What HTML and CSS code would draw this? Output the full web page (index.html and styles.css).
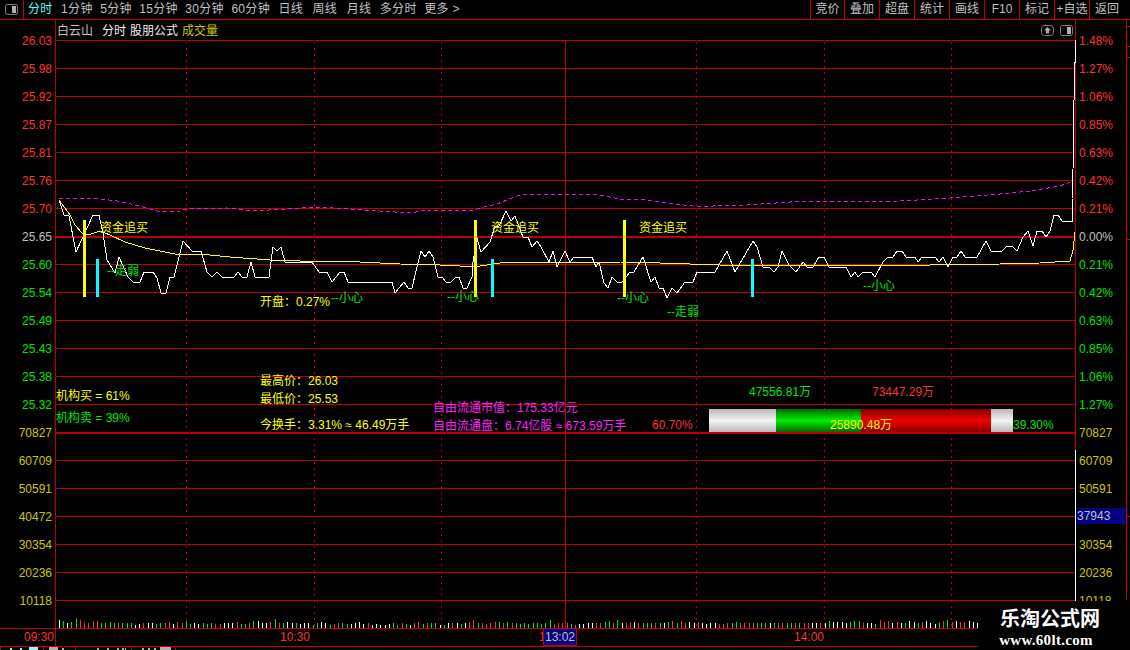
FILE: index.html
```html
<!DOCTYPE html>
<html lang="zh-CN">
<head>
<meta charset="utf-8">
<title>白云山 分时</title>
<link rel="stylesheet" href="styles.css">
</head>
<body>
<header class="toolbar">
  <div class="panel-btn">
    <svg class="icon" width="13" height="11" viewBox="0 0 13 11"><rect class="icon-line" x="0.5" y="0.5" width="12" height="10" rx="2"/><rect class="icon-fill" x="7" y="2" width="4" height="7"/></svg>
  </div>
  <nav class="periods">
    <span class="period active">分时</span>
    <span class="period">1分钟</span>
    <span class="period">5分钟</span>
    <span class="period">15分钟</span>
    <span class="period">30分钟</span>
    <span class="period">60分钟</span>
    <span class="period wide">日线</span>
    <span class="period wide">周线</span>
    <span class="period wide">月线</span>
    <span class="period">多分时</span>
    <span class="period">更多 &gt;</span>
  </nav>
  <nav class="actions">
    <span class="action">竞价</span>
    <span class="action">叠加</span>
    <span class="action">超盘</span>
    <span class="action">统计</span>
    <span class="action">画线</span>
    <span class="action">F10</span>
    <span class="action">标记</span>
    <span class="action">+自选</span>
    <span class="action">返回</span>
  </nav>
</header>

<svg class="chart" width="1130" height="626" viewBox="0 20 1130 626">
  <defs>
    <linearGradient id="gWhite" x1="0" y1="0" x2="0" y2="1"><stop offset="0" stop-color="#b8b8b8"/><stop offset="0.5" stop-color="#f4f4f4"/><stop offset="1" stop-color="#b8b8b8"/></linearGradient>
    <linearGradient id="gGreen" x1="0" y1="0" x2="0" y2="1"><stop offset="0" stop-color="#006800"/><stop offset="0.5" stop-color="#00f000"/><stop offset="1" stop-color="#006800"/></linearGradient>
    <linearGradient id="gRed" x1="0" y1="0" x2="0" y2="1"><stop offset="0" stop-color="#860000"/><stop offset="0.5" stop-color="#f00000"/><stop offset="1" stop-color="#860000"/></linearGradient>
  </defs>

  <!-- frame and vertical dividers -->
  <path class="grid" d="M55.5 20V646M1075.5 20V646M1126.5 20V600M1126 26.5h4M1126 46.5h4M1126 57.5h4M1126 239.5h4M1126 516.5h4M565.5 40V628"/>
  <path class="grid dotted" d="M186.5 42V628M314.5 42V628M441.5 42V628M696.5 42V628M824.5 42V628M951.5 42V628"/>

  <!-- horizontal grid -->
  <path class="grid" d="M55 40.5H1076M55 68.5H1075M55 96.5H1075M55 124.5H1075M55 152.5H1075M55 180.5H1075M55 208.5H1075M55 264.5H1075M55 292.5H1075M55 320.5H1075M55 348.5H1075M55 376.5H1075M55 404.5H1075M55 460.5H1075M55 488.5H1075M55 516.5H1075M55 544.5H1075M55 572.5H1075M55 600.5H1075M0 628.5H1130"/>
  <path class="grid thick" d="M55 237H1075M55 433H1075"/>

  <!-- chart title row -->
  <text class="t grey" x="57" y="35">白云山</text>
  <text class="t white" x="102" y="35">分时</text>
  <text class="t white" x="130" y="35">股朋公式</text>
  <text class="t olive" x="182" y="35">成交量</text>
  <rect class="icon-line" x="1041.5" y="25.5" width="12" height="10" rx="3"/>
  <path class="icon-fill" d="M1047.5 27l3.500 3.500h-2v3h-3v-3h-2z"/>
  <rect class="icon-line" x="1060.5" y="25.5" width="12" height="10" rx="2"/>
  <rect class="icon-fill" x="1067" y="27" width="4" height="7"/>

  <!-- price axis -->
  <g class="t end red">
    <text x="52" y="45">26.03</text><text x="52" y="73">25.98</text><text x="52" y="101">25.92</text><text x="52" y="129">25.87</text><text x="52" y="157">25.81</text><text x="52" y="185">25.76</text><text x="52" y="213">25.70</text>
  </g>
  <text class="t end grey" x="52" y="241">25.65</text>
  <g class="t end green">
    <text x="52" y="269">25.60</text><text x="52" y="297">25.54</text><text x="52" y="325">25.49</text><text x="52" y="353">25.43</text><text x="52" y="381">25.38</text><text x="52" y="409">25.32</text>
  </g>
  <g class="t red">
    <text x="1079" y="45">1.48%</text><text x="1079" y="73">1.27%</text><text x="1079" y="101">1.06%</text><text x="1079" y="129">0.85%</text><text x="1079" y="157">0.63%</text><text x="1079" y="185">0.42%</text><text x="1079" y="213">0.21%</text>
  </g>
  <text class="t grey" x="1079" y="241">0.00%</text>
  <g class="t green">
    <text x="1079" y="269">0.21%</text><text x="1079" y="297">0.42%</text><text x="1079" y="325">0.63%</text><text x="1079" y="353">0.85%</text><text x="1079" y="381">1.06%</text><text x="1079" y="409">1.27%</text>
  </g>

  <!-- volume axis -->
  <g class="t end olive">
    <text x="52" y="437">70827</text><text x="52" y="465">60709</text><text x="52" y="493">50591</text><text x="52" y="521">40472</text><text x="52" y="549">30354</text><text x="52" y="577">20236</text><text x="52" y="605">10118</text>
  </g>
  <g class="t olive">
    <text x="1079" y="437">70827</text><text x="1079" y="465">60709</text><text x="1079" y="493">50591</text><text x="1079" y="549">30354</text><text x="1079" y="577">20236</text><text x="1079" y="605">10118</text>
  </g>
  <rect class="axis-tag" x="1076" y="508" width="50" height="16"/>
  <text class="t grey" x="1077" y="520">37943</text>

  <!-- price traces -->
  <polyline class="trace magenta" points="59,198 93,198 117,201 140,206 157,211 180,211 187,209 227,208 253,211 317,207 333,208 380,211 410,213 427,210 470,211 480,208 497,204 517,196 530,194 567,194 600,195 620,199 647,200 667,203 693,206 713,206 747,205 790,202 900,201 950,198 1000,194 1030,191 1060,186 1073,181"/>
  <polyline class="trace white-line" points="59,200 64,215 69,216 76,252 88,226 93,215 99,215 103,233 107,260 115,273 119,257 128,277 133,282 140,282 144,272 153,272 157,278 161,293 166,293 170,277 174,277 183,241 192,251 201,251 207,272 212,277 217,272 222,277 234,277 238,272 242,277 247,277 251,262 255,277 269,277 273,247 277,251 281,247 285,262 312,262 319,272 327,272 332,282 340,272 344,272 348,282 392,282 395,293 404,282 408,288 412,288 417,267 421,251 425,257 429,251 433,257 438,277 442,277 446,282 451,282 456,277 459,277 463,288 467,288 472,277 473,262 477,238 481,252 490,242 495,226 499,226 506,211 511,221 515,216 523,237 528,237 532,247 537,241 541,247 549,262 553,251 557,267 565,251 570,262 574,257 592,257 596,267 599,262 604,283 608,288 612,277 617,282 622,282 626,277 630,272 634,272 643,257 651,282 655,277 659,288 663,288 667,298 672,288 677,293 685,282 693,282 697,272 715,272 727,251 735,272 753,241 757,247 763,267 769,267 774,272 778,267 782,251 789,265 796,272 803,262 807,267 813,267 819,257 824,257 829,267 846,267 851,277 855,272 858,277 863,272 871,272 875,277 883,262 888,257 893,257 897,251 902,251 906,257 915,257 918,262 922,257 935,257 939,262 943,257 948,267 953,257 957,257 961,251 965,257 977,257 986,241 991,251 1002,251 1007,246 1012,246 1017,251 1023,237 1028,231 1033,246 1037,231 1042,231 1046,237 1050,231 1054,215 1058,215 1062,221 1072,221 1072,199 1073,170 1074,100 1074,62 1075,62 1075,40"/>
  <polyline class="trace yellow-line" points="59,200 70,215 75,225 82,233 88,235 100,231 110,235 125,242 145,248 165,252 180,255 200,254 230,257 270,260 300,261 330,261 360,262 400,264 440,265 460,266 480,266 500,263 520,262 560,262 620,262 660,263 690,264 720,265 790,265 860,265 930,265 1000,264 1040,263 1070,261 1073,250 1075,232"/>

  <!-- signal bars -->
  <rect class="sig-y" x="83" y="220" width="3" height="77"/>
  <rect class="sig-c" x="96" y="259" width="3" height="38"/>
  <rect class="sig-y" x="474" y="220" width="3" height="77"/>
  <rect class="sig-c" x="491" y="259" width="3" height="38"/>
  <rect class="sig-y" x="623" y="220" width="3" height="77"/>
  <rect class="sig-c" x="751" y="259" width="3" height="38"/>

  <!-- signal labels -->
  <g class="t yellow">
    <text x="100" y="232">资金追买</text><text x="491" y="232">资金追买</text><text x="639" y="232">资金追买</text>
    <text x="260" y="306">开盘：0.27%</text>
    <text x="260" y="385">最高价：26.03</text><text x="260" y="403">最低价：25.53</text>
    <text x="260" y="429">今换手：3.31% ≈ 46.49万手</text>
    <text x="56" y="400">机构买 = 61%</text>
  </g>
  <g class="t green">
    <text x="107" y="275">--走弱</text><text x="331" y="302">--小心</text><text x="447" y="301">--小心</text><text x="617" y="302">--小心</text><text x="667" y="316">--走弱</text><text x="863" y="290">--小心</text>
    <text x="56" y="422">机构卖 = 39%</text>
  </g>
  <g class="t pink">
    <text x="433" y="412">自由流通市值：175.33亿元</text><text x="433" y="430">自由流通盘：6.74亿股 ≈ 673.59万手</text>
  </g>

  <!-- money flow bar -->
  <rect x="709" y="409" width="67" height="23" fill="url(#gWhite)"/>
  <rect x="776" y="409" width="85" height="23" fill="url(#gGreen)"/>
  <rect x="861" y="409" width="130" height="23" fill="url(#gRed)"/>
  <rect x="991" y="409" width="22" height="23" fill="url(#gWhite)"/>
  <text class="t yellow" x="830" y="429">25890.48万</text>
  <text class="t red" x="652" y="429">60.70%</text>
  <text class="t green" x="1013" y="429">39.30%</text>
  <text class="t green" x="749" y="396">47556.81万</text>
  <text class="t red" x="872" y="396">73447.29万</text>

  <!-- volume bars -->
  <g id="bars"></g>
  <rect class="bar-w" x="1075" y="450" width="1" height="178"/>

  <!-- time axis -->
  <g class="t red">
    <text x="24" y="641">09:30</text><text x="280" y="641">10:30</text><text x="539" y="641">1</text><text x="794" y="641">14:00</text>
  </g>
  <rect class="time-tag" x="543.500" y="628.500" width="33" height="17"/>
  <text class="t grey" x="545" y="641">13:02</text>
</svg>

<svg class="tabs" width="1130" height="4" viewBox="0 646 1130 4">
  <path class="grid" d="M0 646.500H1130M0.500 646V650M43.500 646V650M75.500 646V650M131.500 646V650M175.500 646V650"/>
  <path class="tab-cyan" d="M10 648h2v2h-2zM20 648h2v2h-2zM29 647h9v3h-9z"/>
  <path class="tab-grey" d="M49 647h9v3h-9zM62 648h2v2h-2zM97 648h2v2h-2zM107 648h2v2h-2zM117 648h2v2h-2zM122 648h2v2h-2zM125 648h1v2h-1zM142 648h2v2h-2zM148 648h2v2h-2zM154 648h2v2h-2zM160 647h11v3h-11z"/>
</svg>

<aside class="watermark">
  <div class="wm-name">乐淘公式网</div>
  <div class="wm-url">www.60lt.com</div>
</aside>
<script src="chart.js"></script>
</body>
</html>
```
FILE: styles.css
```css
html, body {
  margin: 0;
  padding: 0;
  width: 1130px;
  height: 650px;
  overflow: hidden;
  background: #000;
}
body {
  position: relative;
  display: flex;
  flex-direction: column;
  font: 12px "Liberation Sans", "Noto Sans CJK SC", sans-serif;
  color: #c0c0c0;
}

/* toolbar */
.toolbar {
  flex: none;
  display: flex;
  height: 19px;
  border-bottom: 1px solid #c00000;
  line-height: 18px;
}
.panel-btn {
  width: 22px;
  border-right: 1px solid #c00000;
  display: flex;
  align-items: center;
  justify-content: center;
  padding-right: 1px;
  box-sizing: content-box;
}
.icon { display: block; }
.icon-line { fill: none; stroke: #808080; }
.icon-fill { fill: #b0b0b0; }
.periods {
  display: flex;
  gap: 7.500px;
  padding-left: 4px;
  white-space: nowrap;
  letter-spacing: 0.300px;
}
.period.active { color: #55ffff; margin-right: 1px; }
.period.wide { margin-left: 1px; margin-right: 1px; }
.actions {
  margin-left: auto;
  display: flex;
  padding-right: 6px;
}
.action {
  width: 34px;
  text-align: center;
  border-left: 1px solid #c00000;
  white-space: nowrap;
}
.action:first-child { width: 33px; }

/* chart */
.chart { flex: none; display: block; }
.grid { stroke: #c00000; stroke-width: 1; fill: none; shape-rendering: crispEdges; }
.grid.thick { stroke-width: 2; }
.grid.dotted { stroke-dasharray: 2 4; }
.t { font: 12px "Liberation Sans", "Noto Sans CJK SC", sans-serif; }
.end { text-anchor: end; }
.red { fill: #ff3232; }
.green { fill: #00e600; }
.grey { fill: #c0c0c0; }
.white { fill: #f0f0f0; }
.olive { fill: #c8c800; }
.yellow { fill: #ffff00; }
.pink { fill: #ff20ff; }

.trace { fill: none; stroke-width: 1; shape-rendering: crispEdges; }
.white-line { stroke: #fff; }
.yellow-line { stroke: #ffff00; }
.magenta { stroke: #ff00ff; stroke-dasharray: 4 3; }
.sig-y { fill: #ffff00; }
.sig-c { fill: #00ffff; }
.bar-w { fill: #fff; }
.axis-tag { fill: #000080; }
.time-tag { fill: #000080; stroke: #c00000; shape-rendering: crispEdges; }

.vol { stroke-width: 1; fill: none; shape-rendering: crispEdges; }
.vol-w { stroke: #fff; }
.vol-g { stroke: #00e600; }
.vol-r { stroke: #ff3232; }

/* clipped tab strip */
.tabs { flex: none; display: block; }
.tab-cyan { fill: #7fffff; }
.tab-grey { fill: #b0b0b0; }

/* watermark over the bottom right corner */
.watermark {
  position: absolute;
  left: 978px;
  top: 601px;
  width: 152px;
  height: 49px;
  background: #000;
  color: #fff;
  font-family: "Liberation Serif", "Noto Sans CJK SC", serif;
  font-weight: 700;
  text-align: center;
}
.wm-name {
  margin-top: 7px;
  padding-right: 8px;
  font-size: 20px;
  line-height: 22px;
}
.wm-url {
  margin-top: 2px;
  padding-right: 16px;
  font-size: 15px;
  letter-spacing: 0.300px;
  line-height: 16px;
}
```
FILE: chart.js
```js
// Volume bars: one colour letter and one height (px) per minute.
var colours =
  "wgwggrrrrrggggrgggwwrwwggrrwrrggwwgggrrwwwrggrgwwwrgrgwwgwwwggwwgrrggwwwwrwwwwwgg" +
  "rgwrrgrggwgwrwgwrrgrrrrgrgrgggggggggrrrrgrwwwwrrggrgwrrwrgggrgwgrgrrwwrwwwwrrrggrrrrgggwgrrggrg" +
  "rrwwrwgwwwwgggrwwgrrrwrwgwwgrwwwgrgrwrrwww";
var heights = [8,7,5,6,10,8,5,5,7,7,5,5,6,5,5,5,5,5,3,4,5,5,5,4,5,5,6,4,6,5,7,4,5,4,5,4,5,4,4,5,5,5,6,4,4,5,7,7,5,5,6,9,5,5,6,5,5,4,5,5,3,5,6,5,3,4,5,5,4,4,5,6,4,5,3,4,3,3,4,5,3];
var midHeights = [5,4,3,5,6,4,5,5,5,3,3,5,5,5,4,5,6,8,5,5,4,5,6,6,5,6,5,5,4,5,4,5,5,4,5,8,4,5,5,5,4,3,4,4,5,5,5,5,6,7,5,8,5,5,6,6,5,5,5,5,5,5,5,6,7,5,7,5,6,5,6,5,4,5,5,4,4,5,5,6,5,5,5,5,5,5,5,5,5,5,5,5,5,5,5,5];
var tail = [5,5,5,5,5,5,7,6,6,6,5,6,7,7,5,5,5,4,8,6,7,5,6,5,5,7,6,5,6,7,5,4,6,7,8,6,7,6,6,7,6,5];
var nsp = "http://www.w3.org/2000/svg";
var group = document.getElementById("bars");
var paths = { w: "", g: "", r: "" };
for (var i = 0; i < colours.length; i++) {
  var h;
  if (i < heights.length) { h = heights[i]; }
  else if (i >= colours.length - tail.length) { h = tail[i - (colours.length - tail.length)]; }
  else { h = midHeights[(i - heights.length) % midHeights.length]; }
  var x = Math.floor(59.3 + i * (977.5 - 59.3) / (colours.length - 1)) + 0.5;
  paths[colours.charAt(i)] += "M" + x + " 628V" + (628 - h);
}
["w", "g", "r"].forEach(function (c) {
  var p = document.createElementNS(nsp, "path");
  p.setAttribute("class", "vol vol-" + c);
  p.setAttribute("d", paths[c]);
  group.appendChild(p);
});
```
